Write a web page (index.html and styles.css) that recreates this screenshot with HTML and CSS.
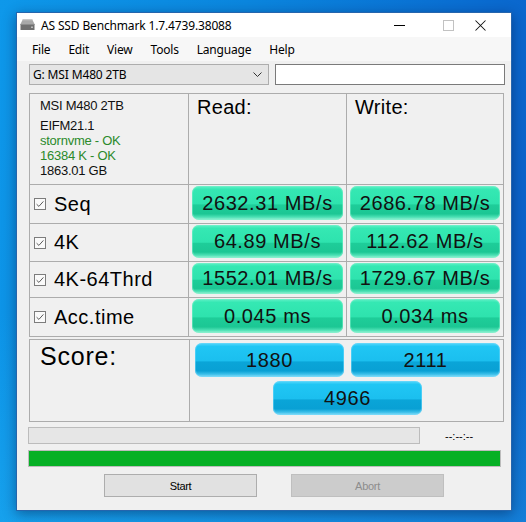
FILE: index.html
```html
<!DOCTYPE html>
<html>
<head>
<meta charset="utf-8">
<title>AS SSD Benchmark</title>
<link rel="stylesheet" href="styles.css">
</head>
<body>
<div class="window">
  <div class="titlebar">
    <svg class="app-icon" width="15" height="13" viewBox="0 0 15 13">
      <path d="M3 1 H12 L14.5 6 H0.5 Z" fill="#a8a8a8"/>
      <path d="M3 1 H12 L12.6 2.2 H2.4 Z" fill="#c9c9c9"/>
      <rect x="0.5" y="6" width="14" height="6" fill="#6f6f6f"/>
      <rect x="0.5" y="6" width="14" height="1" fill="#8c8c8c"/>
      <rect x="11" y="8.5" width="2" height="1.5" fill="#b8b8b8"/>
    </svg>
    <span class="title">AS SSD Benchmark 1.7.4739.38088</span>
    <div class="controls">
      <span class="ctl"><svg width="11" height="11" viewBox="0 0 11 11"><path d="M0 5.5 H11" stroke="#000" stroke-width="1"/></svg></span>
      <span class="ctl"><svg width="11" height="11" viewBox="0 0 11 11"><rect x="0.5" y="0.5" width="10" height="10" fill="none" stroke="#c2c2c2" stroke-width="1"/></svg></span>
      <span class="ctl"><svg width="11" height="11" viewBox="0 0 11 11"><path d="M0.5 0.5 L10.5 10.5 M10.5 0.5 L0.5 10.5" stroke="#111" stroke-width="1.05"/></svg></span>
    </div>
  </div>
  <div class="menubar">
    <span class="menu-item">File</span>
    <span class="menu-item">Edit</span>
    <span class="menu-item">View</span>
    <span class="menu-item">Tools</span>
    <span class="menu-item">Language</span>
    <span class="menu-item">Help</span>
  </div>
  <div class="client">
    <div class="toprow">
      <div class="combo">
        <span class="combo-text">G: MSI M480 2TB</span>
        <svg class="chev" width="9" height="5" viewBox="0 0 9 5"><path d="M0.5 0.5 L4.5 4.5 L8.5 0.5" fill="none" stroke="#333" stroke-width="1"/></svg>
      </div>
      <div class="textbox"></div>
    </div>

    <div class="results">
      <div class="cell info">
        <div class="info-name">MSI M480 2TB</div>
        <div class="info-line">EIFM21.1</div>
        <div class="info-line ok">stornvme - OK</div>
        <div class="info-line ok">16384 K - OK</div>
        <div class="info-line">1863.01 GB</div>
      </div>
      <div class="cell head">Read:</div>
      <div class="cell head">Write:</div>

      <div class="cell label"><svg class="cb" width="12" height="12" viewBox="0 0 12 12"><rect x="0.5" y="0.5" width="11" height="11" fill="#fafafa" stroke="#7c7c7c"/><path d="M2.6 6.2 L4.9 8.4 L9.4 3.4" fill="none" stroke="#5a5a5a" stroke-width="1"/></svg><span>Seq</span></div>
      <div class="cell val"><div class="pill green">2632.31 MB/s</div></div>
      <div class="cell val"><div class="pill green">2686.78 MB/s</div></div>

      <div class="cell label"><svg class="cb" width="12" height="12" viewBox="0 0 12 12"><rect x="0.5" y="0.5" width="11" height="11" fill="#fafafa" stroke="#7c7c7c"/><path d="M2.6 6.2 L4.9 8.4 L9.4 3.4" fill="none" stroke="#5a5a5a" stroke-width="1"/></svg><span>4K</span></div>
      <div class="cell val"><div class="pill green">64.89 MB/s</div></div>
      <div class="cell val"><div class="pill green">112.62 MB/s</div></div>

      <div class="cell label"><svg class="cb" width="12" height="12" viewBox="0 0 12 12"><rect x="0.5" y="0.5" width="11" height="11" fill="#fafafa" stroke="#7c7c7c"/><path d="M2.6 6.2 L4.9 8.4 L9.4 3.4" fill="none" stroke="#5a5a5a" stroke-width="1"/></svg><span>4K-64Thrd</span></div>
      <div class="cell val"><div class="pill green">1552.01 MB/s</div></div>
      <div class="cell val"><div class="pill green">1729.67 MB/s</div></div>

      <div class="cell label"><svg class="cb" width="12" height="12" viewBox="0 0 12 12"><rect x="0.5" y="0.5" width="11" height="11" fill="#fafafa" stroke="#7c7c7c"/><path d="M2.6 6.2 L4.9 8.4 L9.4 3.4" fill="none" stroke="#5a5a5a" stroke-width="1"/></svg><span>Acc.time</span></div>
      <div class="cell val"><div class="pill green">0.045 ms</div></div>
      <div class="cell val"><div class="pill green">0.034 ms</div></div>
    </div>

    <div class="score">
      <div class="cell score-label">Score:</div>
      <div class="cell score-vals">
        <div class="pill blue">1880</div>
        <div class="pill blue">2111</div>
        <div class="pill blue total">4966</div>
      </div>
    </div>

    <div class="progress-row">
      <div class="progress"></div>
      <span class="time">--:--:--</span>
    </div>
    <div class="bar"></div>
    <div class="buttons">
      <button class="btn">Start</button>
      <button class="btn disabled">Abort</button>
    </div>
  </div>
</div>
</body>
</html>
```
FILE: styles.css
```css
html, body {
  margin: 0;
  padding: 0;
}
body {
  width: 526px;
  height: 522px;
  overflow: hidden;
  background:
    linear-gradient(to bottom, rgba(255,255,255,0) 60%, rgba(40,190,250,0.35) 100%),
    linear-gradient(100deg, #0e98ea 0%, #0b86de 40%, #0a6ed2 75%, #0a5cc6 100%);
  font-family: "Noto Sans", "Open Sans", sans-serif;
}
.window {
  margin: 12px 0 0 16px;
  width: 494px;
  height: 497px;
  border: 1px solid #2565ad;
  background: #f0f0f0;
  box-shadow: 0 3px 12px rgba(0, 20, 60, 0.45);
  display: flex;
  flex-direction: column;
}
.titlebar {
  height: 24px;
  background: #ffffff;
  display: flex;
  align-items: center;
  font-size: 12px;
  color: #000;
}
.app-icon {
  margin-left: 3px;
  margin-top: -1px;
}
.title {
  margin-left: 6px;
  letter-spacing: -0.15px;
}
.controls {
  margin-left: auto;
  display: flex;
  align-items: center;
  height: 100%;
}
.ctl {
  display: flex;
  align-items: center;
  justify-content: center;
  width: 46px;
  height: 100%;
}
.ctl:first-child {
  justify-content: flex-start;
  padding-left: 15px;
  box-sizing: border-box;
}
.ctl:last-child {
  width: 40px;
  justify-content: flex-start;
  padding-left: 4px;
  box-sizing: border-box;
}
.menubar {
  height: 24px;
  background: #f7f7f7;
  display: flex;
  align-items: center;
  padding-left: 6px;
  font-size: 12px;
  color: #000;
}
.menu-item {
  padding: 0 9px;
  letter-spacing: -0.2px;
}
.client {
  flex: 1;
  padding: 3px 6px 0 12px;
  display: flex;
  flex-direction: column;
}
.toprow {
  display: flex;
  gap: 6px;
  height: 21px;
}
.combo {
  width: 240px;
  box-sizing: border-box;
  border: 1px solid #adadad;
  background: #e5e5e5;
  display: flex;
  align-items: center;
  padding: 0 6px 0 3px;
  font-size: 12px;
  letter-spacing: -0.15px;
}
.chev {
  margin-left: auto;
}
.textbox {
  flex: 1;
  box-sizing: border-box;
  border: 1px solid #7a7a7a;
  background: #ffffff;
}
.results {
  margin-top: 8px;
  width: 475px;
  box-sizing: border-box;
  display: grid;
  grid-template-columns: 158px 157px 156px;
  grid-template-rows: 90px 38px 37px 35px 38px;
  gap: 1px;
  padding: 1px;
  background: #acacac;
  font-family: "Liberation Sans", Arial, sans-serif;
}
.cell {
  background: #f0f0f0;
}
.info {
  padding: 4px 0 0 10px;
  font-size: 13px;
  line-height: 15px;
  color: #111;
  letter-spacing: -0.25px;
}
.info-name {
  margin-bottom: 5px;
}
.info-line {
  line-height: 15px;
}
.ok {
  color: #2b8a2b;
}
.head {
  font-size: 20px;
  line-height: 23px;
  padding: 2px 0 0 8px;
  letter-spacing: 0.3px;
  color: #000;
}
.label {
  display: flex;
  align-items: center;
  padding-left: 4px;
  font-size: 20px;
  letter-spacing: 0.5px;
  color: #000;
}
.cb {
  margin-right: 8px;
  flex: none;
}
.val {
  padding: 1px 3px 3px 3px;
  display: flex;
}
.pill {
  flex: 1;
  border-radius: 7px;
  display: flex;
  align-items: center;
  justify-content: center;
  font-family: "Liberation Sans", Arial, sans-serif;
  font-size: 20px;
  letter-spacing: 0.6px;
  color: #111;
}
.green {
  background: linear-gradient(to bottom,
    #62f0c8 0%, #35e8b3 10%, #2ee3ae 52%, #1ecd99 56%, #1cc794 82%, #4fe2b6 92%, #a3f3d8 100%);
  box-shadow: inset 0 0 0 1px rgba(120, 240, 200, 0.55);
}
.blue {
  background: linear-gradient(to bottom,
    #5ad8fb 0%, #20c6f4 10%, #1bbfef 52%, #0aa5d8 56%, #09a0d4 82%, #3dc0ea 92%, #8fe0fa 100%);
  box-shadow: inset 0 0 0 1px rgba(110, 215, 250, 0.55);
}
.score {
  margin-top: 2px;
  width: 475px;
  height: 83px;
  box-sizing: border-box;
  display: grid;
  grid-template-columns: 159px 1fr;
  gap: 1px;
  padding: 1px;
  background: #acacac;
  font-family: "Liberation Sans", Arial, sans-serif;
}
.score-label {
  font-size: 25px;
  line-height: 29px;
  padding: 2px 0 0 10px;
  letter-spacing: 0.8px;
  color: #000;
}
.score-vals {
  display: grid;
  grid-template-columns: 149px 149px;
  grid-template-rows: 34px 34px;
  column-gap: 7px;
  row-gap: 4px;
  padding: 3px 0 0 5px;
  align-content: start;
}
.score-vals .pill {
  height: 34px;
}
.total {
  grid-column: 1 / span 2;
  justify-self: center;
  width: 149px;
  flex: none;
}
.progress-row {
  margin-top: 5px;
  margin-left: -1px;
  display: flex;
  align-items: center;
  height: 17px;
}
.progress {
  width: 392px;
  height: 17px;
  box-sizing: border-box;
  border: 1px solid #bcbcbc;
  background: #e6e6e6;
}
.time {
  margin-left: 25px;
  font-family: "Liberation Sans", Arial, sans-serif;
  font-size: 11px;
  letter-spacing: 0px;
  color: #000;
}
.bar {
  margin-top: 6px;
  margin-left: -1px;
  width: 473px;
  height: 17px;
  box-sizing: border-box;
  border: 1px solid #bcbcbc;
  background: #06b025;
}
.buttons {
  margin-top: 7px;
  display: flex;
  padding-left: 75px;
  gap: 34px;
}
.btn {
  width: 153px;
  height: 23px;
  margin: 0;
  box-sizing: border-box;
  border: 1px solid #adadad;
  background: #e1e1e1;
  font-family: "Liberation Sans", Arial, sans-serif;
  font-size: 11px;
  letter-spacing: -0.3px;
  color: #000;
  padding: 0;
}
.btn.disabled {
  border-color: #bfbfbf;
  background: #cccccc;
  color: #8d8d8d;
}
```
